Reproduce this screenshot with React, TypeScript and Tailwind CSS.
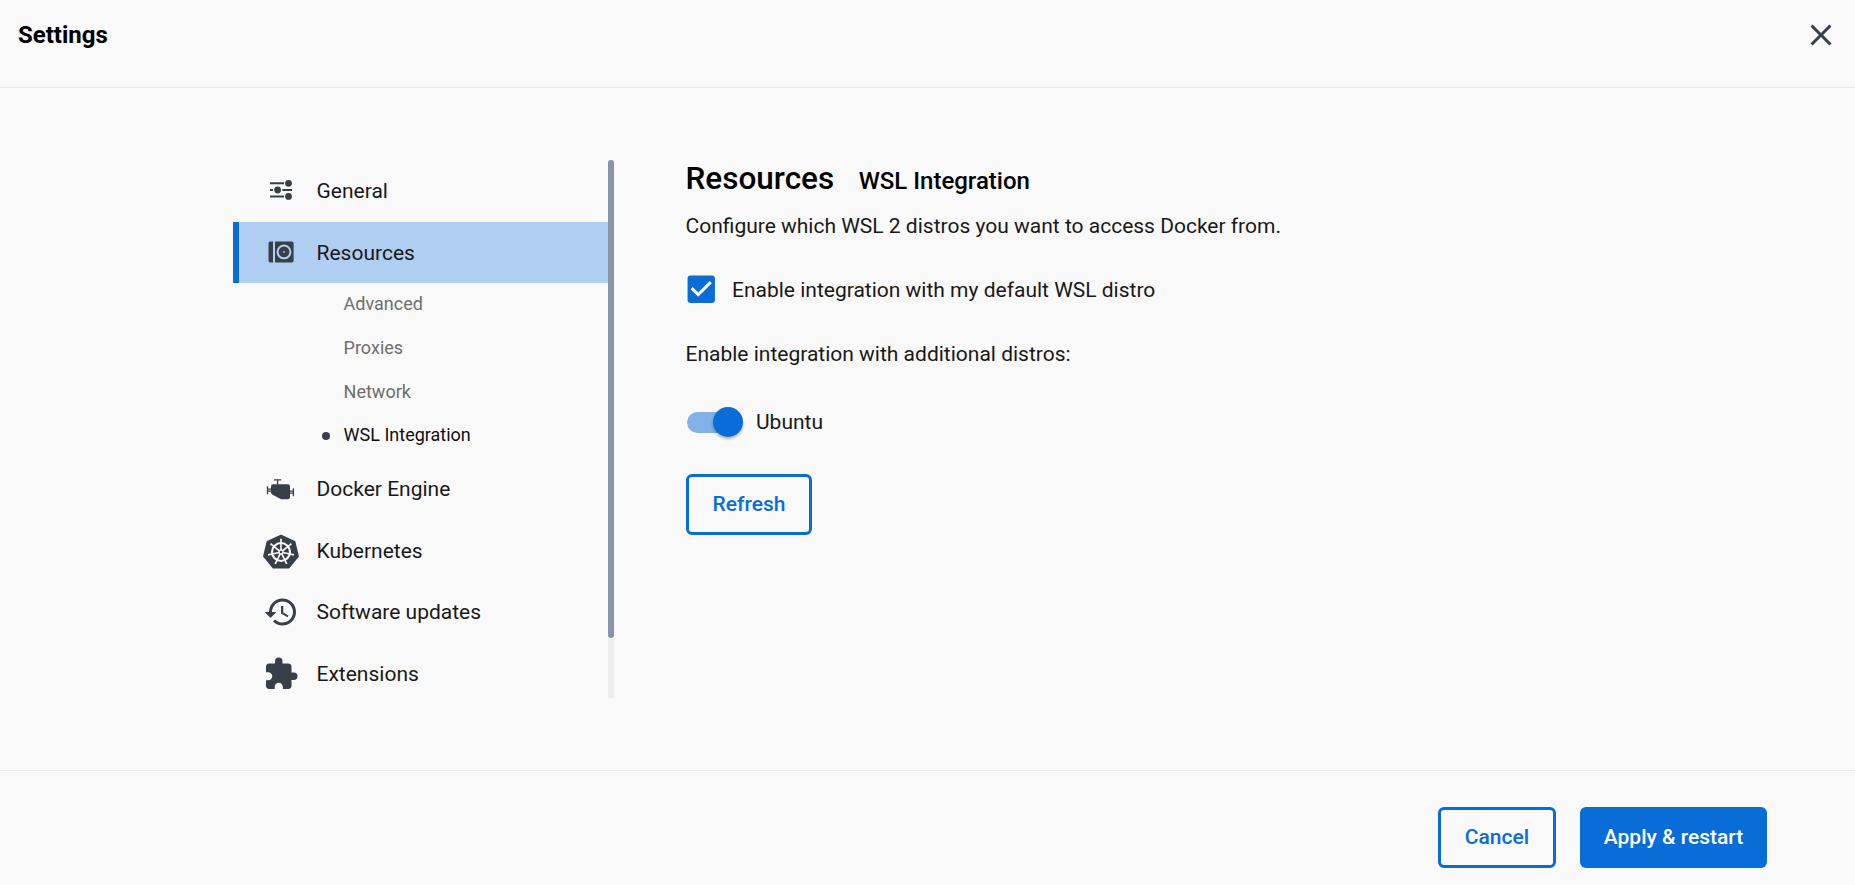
import type { ReactNode } from 'react';
import { MdCheckBox, MdClose, MdExtension, MdHistory } from 'react-icons/md';

const ICON = 'size-9 shrink-0 text-[#393f49]';

function SlidersIcon() {
  return (
    <svg className={ICON} viewBox="0 0 36 36" fill="currentColor">
      <path d="M7 9.300h14v2H7zM7 16h3v2H7zM19.300 16H29v2h-9.700zM7 22.400h14v2H7z" />
      <circle cx="25.500" cy="10.300" r="3.400" />
      <circle cx="14.600" cy="17" r="3.400" />
      <circle cx="25.500" cy="23.400" r="3.400" />
    </svg>
  );
}

function DriveIcon() {
  return (
    <svg className={ICON} viewBox="0 0 36 36" fill="currentColor">
      <path d="M7.400 6.500H10v21H7.400a1.900 1.900 0 0 1-1.900-1.900V8.400a1.900 1.900 0 0 1 1.900-1.900z" />
      <path d="M12 6.500h16.700a1.900 1.900 0 0 1 1.900 1.900v17.200a1.900 1.900 0 0 1-1.900 1.900H12z" />
      <circle cx="21" cy="16.900" r="6.400" fill="none" stroke="#b0cef1" strokeWidth="2" />
      <circle cx="21" cy="16.900" r="0.900" fill="#b0cef1" />
    </svg>
  );
}

function EngineIcon() {
  return (
    <svg className={ICON} viewBox="0 0 36 36" fill="currentColor">
      <path d="M10 13.200h15q2 0 2 2v11q0 2-2 2h-6q-1 0-1.900-.5l-7.500-4q-1.600-.8-1.600-2v-6.500q0-2 2-2z" />
      <path
        d="M11 8.800h7.200M14.600 8.800v5M4.500 15.200v8M4.500 18.200h4M4.500 20.200h4M30.400 17.200v8M26 20.200h4.400M26 22.200h4.400"
        fill="none"
        stroke="currentColor"
        strokeWidth="1.300"
      />
    </svg>
  );
}

const SPOKES = [0, 1, 2, 3, 4, 5, 6].map((i) => (i * 360) / 7);

function KubernetesIcon() {
  return (
    <svg className={ICON} viewBox="0 0 36 36">
      <path
        d="M18 2.300 31.700 8.700 35.200 23.200 25.800 34.800H10.200L.8 23.200 4.300 8.700z"
        fill="currentColor"
        stroke="currentColor"
        strokeWidth="1.400"
        strokeLinejoin="round"
      />
      <g fill="none" stroke="#f9f9f9">
        <circle cx="18" cy="19" r="9" strokeWidth="2.100" />
        {SPOKES.map((a) => (
          <path key={a} d="M18 17V6.400M17.100 6.500h1.800" strokeWidth="1.600" transform={`rotate(${a} 18 19)`} />
        ))}
        <circle cx="18" cy="19" r="2" strokeWidth="1.300" />
      </g>
    </svg>
  );
}

function NavRow({ icon, label, active }: { icon: ReactNode; label: string; active?: boolean }) {
  return (
    <a
      className={
        active
          ? 'flex h-[61px] shrink-0 items-center gap-[17.500px] border-l-6 border-[#086dd7] bg-[#b0cef1] pl-6'
          : 'flex h-[61.500px] shrink-0 items-center gap-[17.500px] pl-[30px]'
      }
    >
      {icon}
      <span>{label}</span>
    </a>
  );
}

function SubRow({ label, active }: { label: string; active?: boolean }) {
  return (
    <a
      className={
        active
          ? 'flex h-[43.750px] items-center pb-[1.500px] pl-[89px] text-[#0f0f10]'
          : 'flex h-[43.750px] items-center pb-[1.500px] pl-[110.600px] text-[#6e6e6e]'
      }
    >
      {active && <span className="mt-[1px] mr-[13.600px] size-2 shrink-0 rounded-full bg-[#393f49]" />}
      {label}
    </a>
  );
}

export default function App() {
  return (
    <div className="flex h-[885px] w-full flex-col overflow-hidden bg-[#f9f9f9] font-['Roboto',sans-serif] text-[21px] leading-[30px] text-[#18181a]">
      <header className="flex h-[88px] shrink-0 items-start justify-between border-b border-[#e9e9e9] pt-[17px] pr-4 pl-[18px]">
        <h1 className="pt-[2px] text-2xl leading-[32px] font-bold text-black">Settings</h1>
        <MdClose className={ICON} />
      </header>

      <main className="flex h-[682px] shrink-0 pt-[72px] pl-[233px]">
        <nav className="flex h-[538px] w-[381px] shrink-0">
          <div className="flex w-[375px] flex-col overflow-hidden">
            <div className="h-[62px] shrink-0">
              <NavRow icon={<SlidersIcon />} label="General" />
            </div>
            <NavRow icon={<DriveIcon />} label="Resources" active />
            <div className="shrink-0 pb-[0.500px] text-lg leading-6">
              <SubRow label="Advanced" />
              <SubRow label="Proxies" />
              <SubRow label="Network" />
              <SubRow label="WSL Integration" active />
            </div>
            <NavRow icon={<EngineIcon />} label="Docker Engine" />
            <NavRow icon={<KubernetesIcon />} label="Kubernetes" />
            <NavRow icon={<MdHistory className={ICON} />} label="Software updates" />
            <NavRow icon={<MdExtension className={ICON} />} label="Extensions" />
          </div>
          <div className="h-full w-[6px] bg-[#eeeeee]">
            <div className="h-[478px] rounded-full bg-[#8993a9]" />
          </div>
        </nav>

        <section className="flex flex-col items-start pl-[71.500px]">
          <div className="flex items-baseline gap-[24.500px] leading-[38px] font-medium text-black">
            <h2 className="text-[31.500px]">Resources</h2>
            <h3 className="text-2xl">WSL Integration</h3>
          </div>
          <p className="mt-[13px]">Configure which WSL 2 distros you want to access Docker from.</p>
          <label className="mt-[30px] flex items-center gap-[12.500px]">
            <MdCheckBox className="my-[0.250px] -ml-[2.500px] size-[36.500px] text-[#086dd7]" />
            Enable integration with my default WSL distro
          </label>
          <p className="mt-[31px]">Enable integration with additional distros:</p>
          <div className="mt-[38px] flex items-center gap-[13px] pl-[1.500px]">
            <span className="flex h-[21px] w-[56px] items-center justify-end rounded-full bg-[linear-gradient(90deg,#82b2e8_50px,transparent_50px)]">
              <span className="size-[30px] shrink-0 rounded-full bg-[#086dd7] shadow-[0_2px_3px_rgba(0,0,0,0.3)]" />
            </span>
            Ubuntu
          </div>
          <button className="mt-[37px] ml-[0.500px] h-[61px] w-[126px] rounded-md border-3 border-[#086dd7] pb-[2px] font-medium text-[#086dd7]">
            Refresh
          </button>
        </section>
      </main>

      <footer className="flex grow items-start justify-end gap-6 border-t border-[#e9e9e9] pt-9 pr-[88px] font-medium">
        <button className="h-[61px] w-[118px] rounded-md border-3 border-[#086dd7] pb-[2px] text-[#086dd7]">Cancel</button>
        <button className="h-[61px] w-[187px] rounded-md bg-[#086dd7] pb-[2px] text-white">Apply &amp; restart</button>
      </footer>
    </div>
  );
}
